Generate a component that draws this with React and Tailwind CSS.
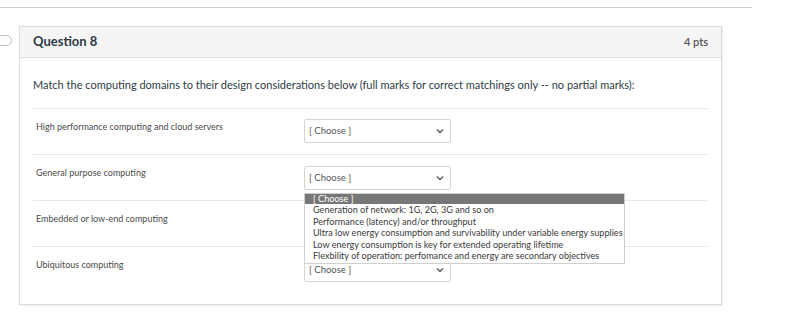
import React from 'react';

const rows = [
  'High performance computing and cloud servers',
  'General purpose computing',
  'Embedded or low-end computing',
  'Ubiquitous computing',
];

const options = [
  'Generation of network: 1G, 2G, 3G and so on',
  'Performance (latency) and/or throughput',
  'Ultra low energy consumption and survivability under variable energy supplies',
  'Low energy consumption is key for extended operating lifetime',
  'Flexbility of operation: perfomance and energy are secondary objectives',
];

const Chevron = () => (
  <svg width="8" height="6" viewBox="0 0 8 6" className="text-[#555]">
    <path d="M1 1.5 L4 4.5 L7 1.5" fill="none" stroke="currentColor" strokeWidth="1.3" />
  </svg>
);

const Select = ({ open }) => (
  <div className="relative w-[147px]">
    <div className="h-[24px] border border-[#d4d4d4] bg-white rounded-[2px] flex items-center justify-between pl-[4px] pr-[6px] text-[9.5px] text-[#555]">
      <span>[ Choose ]</span>
      <Chevron />
    </div>
    {open && (
      <div className="absolute left-0 top-[27px] w-[321px] bg-white border border-[#cfcfcf] z-10 text-[9.1px] leading-[11.5px] text-[#3a3a3a] pb-[1px]">
        <div className="bg-[#777] text-white h-[10px] leading-[10px] pl-[8px]">[ Choose ]</div>
        {options.map((o, i) => (
          <div key={i} className="pl-[8px] whitespace-nowrap">{o}</div>
        ))}
      </div>
    )}
  </div>
);

export default function App() {
  return (
    <div className="w-[800px] h-[315px] bg-white overflow-hidden relative font-['Lato','Liberation_Sans',sans-serif]">
      <div className="h-[7px]" />
      <div className="w-[752px] border-t border-[#d2d2d2]" />

      <div className="absolute left-[-4px] top-[35px] w-[16px] h-[11px] rounded-full border border-[#bbb] bg-white" />

      <div className="ml-[19px] mt-[18px] w-[703px] border border-[#dcdcdc] shadow-[1px_1px_2px_rgba(0,0,0,0.08)]">
        <div className="h-[31px] bg-[#f5f5f5] border-b border-[#dcdcdc] flex items-center justify-between pl-[13px] pr-[13px]">
          <span className="text-[13px] font-bold text-[#2d3b45]">Question 8</span>
          <span className="text-[11px] font-semibold text-[#555]">4 pts</span>
        </div>

        <div className="px-[13px] pt-[20px] pb-[12px]">
          <p className="text-[11px] text-[#2d3b45] leading-[14px]">
            Match the computing domains to their design considerations below (full marks for correct matchings only -- no partial marks):
          </p>

          <div className="mt-[16px]">
            {rows.map((r, i) => (
              <div key={i} className="border-t border-[#e8e8e8] h-[46px] flex pl-[3px]">
                <div className="w-[268px] pt-[11px] text-[9px] leading-[13px] text-[#4a4a4a]">{r}</div>
                <div className={i === 0 ? 'pt-[10px]' : 'pt-[11px]'}>
                  <Select open={i === 1} />
                </div>
              </div>
            ))}
          </div>
        </div>
      </div>
    </div>
  );
}
